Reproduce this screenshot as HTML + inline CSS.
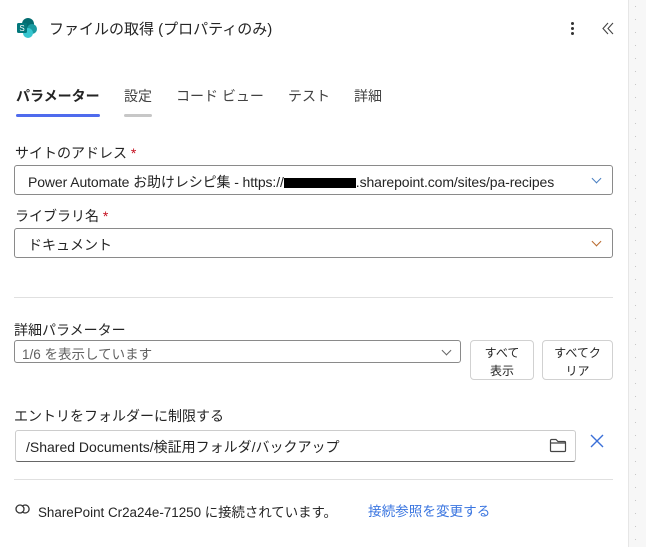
<!DOCTYPE html>
<html><head><meta charset="utf-8"><style>
*{box-sizing:border-box;margin:0;padding:0}
body{width:646px;height:547px;overflow:hidden;background:#fff;font-family:"Liberation Sans","Noto Sans CJK JP",sans-serif;color:#242424;position:relative}
.a{position:absolute;white-space:nowrap}
.box{position:absolute;border:1px solid #8a8a8a;border-radius:3px;background:#fff}
.chev{position:absolute;width:7px;height:7px;border-right:1.2px solid #555;border-bottom:1.2px solid #555;transform:rotate(45deg)}
.btn{position:absolute;border:1px solid #d1d1d1;border-radius:4px;font-size:12px;text-align:center;line-height:18px;padding-top:3px}
.req{color:#c50f1f}
</style></head><body>
<div class="a" style="left:628px;top:0;width:18px;height:547px;background:#f7f7f7;border-left:1px solid #e6e6e6;background-image:radial-gradient(#c8c8c8 0.6px,transparent 0.8px);background-size:13px 13px"></div>
<svg class="a" style="left:16px;top:17px" width="22" height="22" viewBox="0 0 22 22"><circle cx="12" cy="7" r="6" fill="#036c70"/><circle cx="16" cy="12" r="5" fill="#1a9ba1"/><circle cx="12" cy="16" r="5" fill="#37c6d0"/><rect x="1" y="6" width="10" height="10" rx="1.5" fill="#03787c"/><text x="6" y="14" font-size="8" fill="#fff" text-anchor="middle" font-family="Liberation Sans">S</text></svg>
<div class="a" style="left:49px;top:18px;font-size:15px">ファイルの取得 (プロパティのみ)</div>
<div class="a" style="left:571px;top:22px;width:3px"><div style="width:3px;height:3px;background:#333;border-radius:50%;margin-bottom:2px"></div><div style="width:3px;height:3px;background:#333;border-radius:50%;margin-bottom:2px"></div><div style="width:3px;height:3px;background:#333;border-radius:50%"></div></div>
<svg class="a" style="left:602px;top:22px" width="12" height="13" viewBox="0 0 12 13"><path d="M6 1L1 6.5L6 12M11 1L6 6.5L11 12" fill="none" stroke="#444" stroke-width="1.1"/></svg>
<div class="a" style="left:16px;top:86px;font-size:14px;font-weight:bold">パラメーター</div>
<div class="a" style="left:16px;top:114px;width:84px;height:3px;background:#4f6bed;border-radius:2px"></div>
<div class="a" style="left:124px;top:86px;font-size:14px;color:#424242">設定</div>
<div class="a" style="left:124px;top:114px;width:28px;height:3px;background:#c7c7c7;border-radius:2px"></div>
<div class="a" style="left:176px;top:86px;font-size:14px;color:#424242">コード ビュー</div>
<div class="a" style="left:288px;top:86px;font-size:14px;color:#424242">テスト</div>
<div class="a" style="left:354px;top:86px;font-size:14px;color:#424242">詳細</div>
<div class="a" style="left:15px;top:143px;font-size:14px">サイトのアドレス<span class="req"> *</span></div>
<div class="box" style="left:14px;top:165px;width:599px;height:30px"></div>
<div class="a" style="left:28px;top:172px;font-size:14px;letter-spacing:-0.1px">Power Automate お助けレシピ集 - https://<span style="display:inline-block;width:72px;height:10px;background:#000;vertical-align:middle"></span>.sharepoint.com/sites/pa-recipes</div>
<div class="chev" style="left:593px;top:175px;border-color:#4a7fc1"></div>
<div class="a" style="left:15px;top:206px;font-size:14px">ライブラリ名<span class="req"> *</span></div>
<div class="box" style="left:14px;top:228px;width:599px;height:30px"></div>
<div class="a" style="left:28px;top:235px;font-size:14px">ドキュメント</div>
<div class="chev" style="left:593px;top:238px;border-color:#b86a2e"></div>
<div class="a" style="left:14px;top:297px;width:599px;height:1px;background:#e0e0e0"></div>
<div class="a" style="left:14px;top:320px;font-size:14px">詳細パラメーター</div>
<div class="box" style="left:14px;top:340px;width:447px;height:23px"></div>
<div class="a" style="left:22px;top:343px;font-size:13.5px;color:#616161">1/6 を表示しています</div>
<div class="chev" style="left:443px;top:347px;border-color:#666"></div>
<div class="btn" style="left:470px;top:340px;width:64px;height:40px">すべて<br>表示</div>
<div class="btn" style="left:542px;top:340px;width:71px;height:40px">すべてク<br>リア</div>
<div class="a" style="left:14px;top:406px;font-size:14px">エントリをフォルダーに制限する</div>
<div class="box" style="left:15px;top:430px;width:561px;height:32px;border-color:#ccc;border-bottom-color:#666"></div>
<div class="a" style="left:26px;top:437px;font-size:14px">/Shared Documents/検証用フォルダ/バックアップ</div>
<svg class="a" style="left:549px;top:437px" width="18" height="16" viewBox="0 0 18 16"><path d="M1.5 3.5v10a1 1 0 0 0 1 1h13a1 1 0 0 0 1-1v-8a1 1 0 0 0-1-1H9L7 2.5H2.5a1 1 0 0 0-1 1zM1.5 6h15" fill="none" stroke="#444" stroke-width="1.2"/></svg>
<svg class="a" style="left:590px;top:434px" width="14" height="14" viewBox="0 0 14 14"><path d="M1 1L13 13M13 1L1 13" stroke="#3a6fd8" stroke-width="1.4"/></svg>
<div class="a" style="left:14px;top:479px;width:599px;height:1px;background:#e0e0e0"></div>
<svg class="a" style="left:14px;top:502px" width="16" height="14" viewBox="0 0 16 14"><circle cx="6" cy="7" r="4" fill="none" stroke="#333" stroke-width="1.3"/><path d="M8 4.5a4 4 0 1 1 0 5" fill="none" stroke="#333" stroke-width="1.3"/></svg>
<div class="a" style="left:38px;top:501px;font-size:13.4px">SharePoint Cr2a24e-71250 に接続されています。</div>
<div class="a" style="left:368px;top:500px;font-size:13.6px;color:#3b76e0">接続参照を変更する</div>
</body></html>
